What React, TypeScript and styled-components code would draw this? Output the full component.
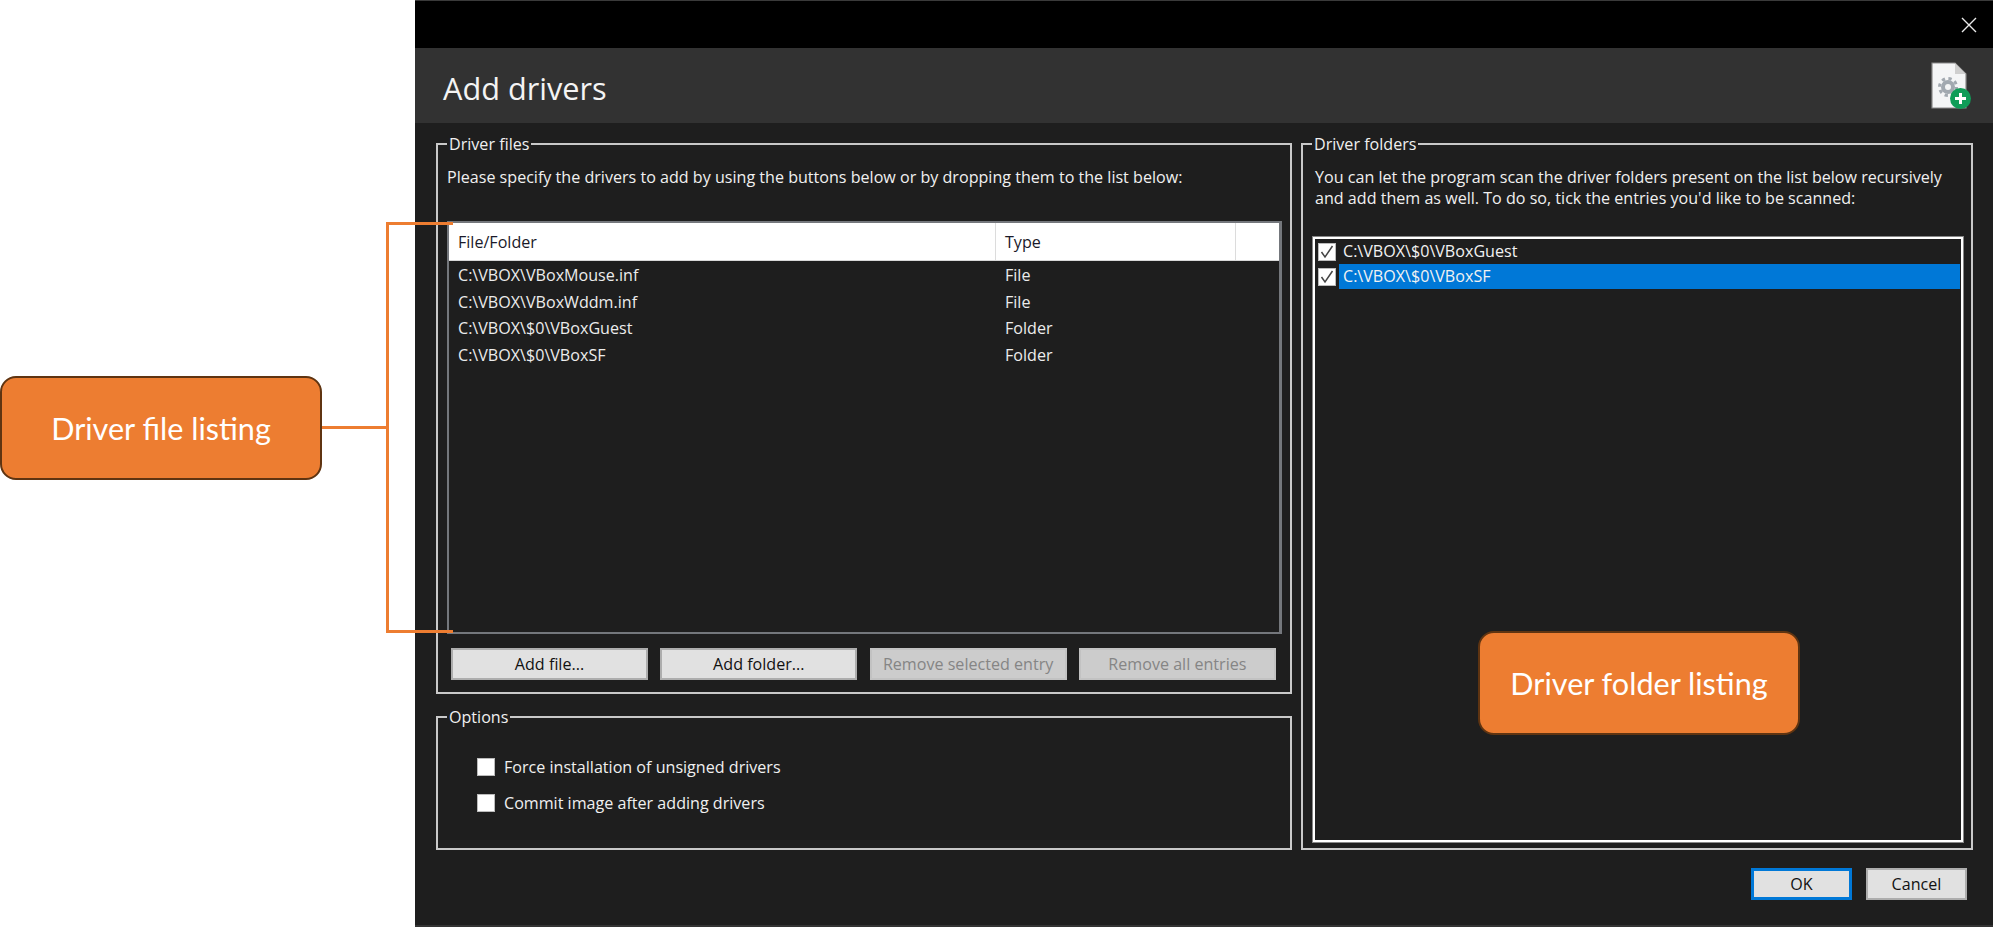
import React from "react";
import styled, { createGlobalStyle } from "styled-components";

const Global = createGlobalStyle`
  html, body { margin: 0; padding: 0; background: #fff; overflow: hidden; }
  * { box-sizing: border-box; }
`;

const ui = `"Open Sans", "Noto Sans", sans-serif`;

const Page = styled.div`
  position: relative;
  display: flex;
  width: 1993px;
  height: 927px;
  background: #fff;
  font-family: ${ui};
`;

const Annotations = styled.aside`
  width: 415px;
  flex: none;
  padding: 376px 0 0 0;
`;

const Callout = styled.div`
  display: flex;
  align-items: center;
  justify-content: center;
  width: 322px;
  height: 104px;
  background: #ed7d31;
  border: 2px solid #5f3411;
  border-radius: 16px;
  color: #fff;
  font-family: Lato, "Open Sans", sans-serif;
  font-size: 30.6px;
`;

const FolderCallout = styled(Callout)`
  position: absolute;
  left: 1478px;
  top: 631px;
`;

const Bracket = styled.div`
  position: absolute;
  left: 386px;
  top: 222px;
  width: 67px;
  height: 411px;
  border: 3px solid #ed7d31;
  border-right: 0;
`;

const BracketStem = styled.div`
  position: absolute;
  left: 322px;
  top: 426px;
  width: 66px;
  height: 3px;
  background: #ed7d31;
`;

const Win = styled.main`
  flex: 1;
  display: flex;
  flex-direction: column;
  height: 927px;
  background: #1e1e1e;
  color: #f0f0f0;
  font-size: 16.1px;
  border-top: 1px solid #3a3a3a;
  border-bottom: 2px solid #333;
`;

const TitleBar = styled.div`
  display: flex;
  justify-content: flex-end;
  align-items: center;
  flex: none;
  height: 47px;
  background: #000;
  padding-right: 16px;
`;

const Header = styled.header`
  display: flex;
  align-items: center;
  justify-content: space-between;
  flex: none;
  height: 75px;
  background: #323232;
  padding: 0 21px 0 28px;
`;

const Title = styled.h1`
  margin: 5px 0 0;
  font-size: 30.7px;
  font-weight: 400;
  color: #f4f4f4;
`;

const Body = styled.div`
  display: grid;
  grid-template-columns: 856px 672px;
  column-gap: 9px;
  flex: none;
  height: 727px;
  padding: 11px 0 0 21px;
`;

const LeftColumn = styled.div`
  display: flex;
  flex-direction: column;
  gap: 13px;
`;

const Group = styled.fieldset<{ $h: number }>`
  margin: 0;
  min-width: 0;
  height: ${(p) => p.$h}px;
  padding: 0;
  border: 2px solid #c9c9c9;
`;

const Legend = styled.legend`
  margin-left: 9px;
  padding: 0 2px;
  font-size: 16.1px;
  line-height: 20px;
  color: #f0f0f0;
`;

const Hint = styled.p`
  margin: 0;
  height: 67px;
  padding: 13px 0 0 9px;
  line-height: 20.5px;
  white-space: pre-line;
`;

const FolderHint = styled(Hint)`
  height: 83px;
  padding-left: 12px;
`;

const FileTable = styled.div`
  margin: 0 8px 0 9px;
  height: 413px;
  border: 2px solid #74777c;
  border-right-width: 3px;
`;

const HeaderRow = styled.div`
  display: grid;
  grid-template-columns: 547px 240px 1fr;
  height: 38px;
  margin-bottom: 1px;
  background: #fff;
  color: #1a1a2a;
  border-bottom: 1px solid #d8d8d8;
`;

const HeaderCell = styled.div`
  display: flex;
  align-items: center;
  padding-left: 9px;
  border-right: 1px solid #dcdcdc;
  &:last-child { border-right: 0; }
`;

const Row = styled.div`
  display: grid;
  grid-template-columns: 547px 1fr;
  height: 26.7px;
  line-height: 26.7px;
  color: #ececec;
`;

const RowCell = styled.div`
  padding-left: 9px;
`;

const Actions = styled.div`
  display: grid;
  grid-template-columns: repeat(4, 197px);
  column-gap: 12.3px;
  padding: 14px 0 0 13px;
`;

const Btn = styled.button<{ $disabled?: boolean; $primary?: boolean }>`
  height: 32px;
  padding: 0;
  font-family: ${ui};
  font-size: 16.1px;
  color: ${(p) => (p.$disabled ? "#858585" : "#111")};
  background: ${(p) => (p.$disabled ? "#cccccc" : "#e1e1e1")};
  border: ${(p) => (p.$primary ? "3px solid #0078d7" : p.$disabled ? "2px solid #c2c2c2" : "2px solid #adadad")};
`;

const OptionList = styled.div`
  display: flex;
  flex-direction: column;
  gap: 18px;
  padding: 31px 0 0 39px;
`;

const Option = styled.label`
  display: flex;
  align-items: center;
  gap: 9px;
  height: 18px;
`;

const Box = styled.span`
  display: flex;
  align-items: center;
  justify-content: center;
  width: 18px;
  height: 18px;
  flex: none;
  background: #fff;
  border: 1px solid #bbb;
`;

const FolderList = styled.div`
  margin: 0 8px 0 10px;
  height: 605px;
  padding: 0 1px 0 3px;
  border: 2px solid #fff;
  outline: 1px solid #888;
`;

const FolderRow = styled.div`
  display: flex;
  align-items: center;
  height: 25px;
  gap: 3px;
`;

const FolderText = styled.div<{ $selected?: boolean }>`
  flex: 1;
  height: 25px;
  line-height: 24px;
  padding-left: 4px;
  background: ${(p) => (p.$selected ? "#0078d7" : "transparent")};
  color: #f2f2f2;
`;

const Footer = styled.footer`
  display: flex;
  justify-content: flex-end;
  gap: 14px;
  padding: 18px 26px 0 0;
`;

const FootBtn = styled(Btn)`
  width: 101px;
`;

const Check = () => (
  <svg width="14" height="14" viewBox="0 0 14 14" fill="none">
    <path d="M1.5 7 L5 12 L12.5 1" stroke="#444" strokeWidth="1.5" />
  </svg>
);

const CloseIcon = () => (
  <svg width="16" height="16" viewBox="0 0 16 16" fill="none">
    <path d="M1 1 L15 15 M15 1 L1 15" stroke="#eaeaea" strokeWidth="1.4" />
  </svg>
);

const DriverIcon = () => (
  <svg width="41" height="48" viewBox="0 0 41 48" fill="none">
    <path d="M1 1 H24 L35 12 V46 H1 Z" fill="#f4f5f6" stroke="#8a8a8a" strokeWidth="1.2" />
    <path d="M24 1 V12 H35 Z" fill="#cfcfcf" />
    <circle cx="17" cy="25" r="5" stroke="#a2a9b0" strokeWidth="4" />
    <circle cx="17" cy="25" r="8.5" stroke="#a2a9b0" strokeWidth="3" strokeDasharray="3.3 3.4" />
    <circle cx="29.5" cy="36.5" r="10.5" fill="#0f9d58" />
    <path d="M29.5 31 V42 M24 36.5 H35" stroke="#fff" strokeWidth="3" />
  </svg>
);

const files = [
  ["C:\\VBOX\\VBoxMouse.inf", "File"],
  ["C:\\VBOX\\VBoxWddm.inf", "File"],
  ["C:\\VBOX\\$0\\VBoxGuest", "Folder"],
  ["C:\\VBOX\\$0\\VBoxSF", "Folder"],
];

export default function App() {
  return (
    <Page>
      <Global />
      <Annotations>
        <Callout>Driver file listing</Callout>
      </Annotations>
      <Win>
        <TitleBar>
          <CloseIcon />
        </TitleBar>
        <Header>
          <Title>Add drivers</Title>
          <DriverIcon />
        </Header>
        <Body>
          <LeftColumn>
            <Group $h={560}>
              <Legend>Driver files</Legend>
              <Hint>Please specify the drivers to add by using the buttons below or by dropping them to the list below:</Hint>
              <FileTable>
                <HeaderRow>
                  <HeaderCell>File/Folder</HeaderCell>
                  <HeaderCell>Type</HeaderCell>
                  <HeaderCell />
                </HeaderRow>
                {files.map(([path, type]) => (
                  <Row key={path}>
                    <RowCell>{path}</RowCell>
                    <RowCell>{type}</RowCell>
                  </Row>
                ))}
              </FileTable>
              <Actions>
                <Btn>Add file...</Btn>
                <Btn>Add folder...</Btn>
                <Btn $disabled>Remove selected entry</Btn>
                <Btn $disabled>Remove all entries</Btn>
              </Actions>
            </Group>
            <Group $h={143}>
              <Legend>Options</Legend>
              <OptionList>
                <Option>
                  <Box />
                  Force installation of unsigned drivers
                </Option>
                <Option>
                  <Box />
                  Commit image after adding drivers
                </Option>
              </OptionList>
            </Group>
          </LeftColumn>
          <Group $h={716}>
            <Legend>Driver folders</Legend>
            <FolderHint>{"You can let the program scan the driver folders present on the list below recursively\nand add them as well. To do so, tick the entries you'd like to be scanned:"}</FolderHint>
            <FolderList>
              <FolderRow>
                <Box><Check /></Box>
                <FolderText>C:\VBOX\$0\VBoxGuest</FolderText>
              </FolderRow>
              <FolderRow>
                <Box><Check /></Box>
                <FolderText $selected>C:\VBOX\$0\VBoxSF</FolderText>
              </FolderRow>
            </FolderList>
          </Group>
        </Body>
        <Footer>
          <FootBtn $primary>OK</FootBtn>
          <FootBtn>Cancel</FootBtn>
        </Footer>
      </Win>
      <Bracket />
      <BracketStem />
      <FolderCallout>Driver folder listing</FolderCallout>
    </Page>
  );
}
